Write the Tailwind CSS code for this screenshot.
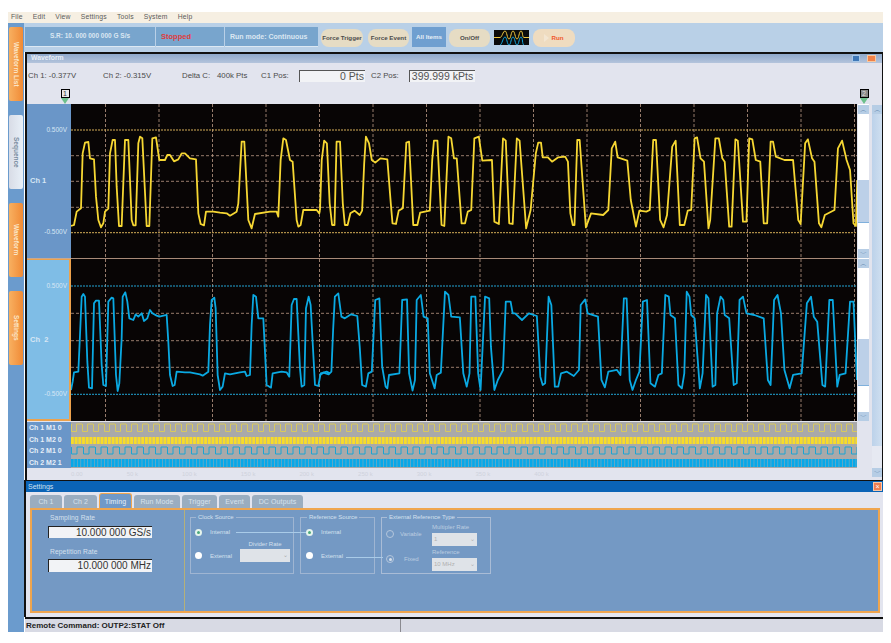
<!DOCTYPE html>
<html>
<head>
<meta charset="utf-8">
<script src="https://cdn.jsdelivr.net/npm/@tailwindcss/browser@4"></script>
</head>
<body class="bg-white">
<div class="ml-2 mt-3 w-[875px] h-[620px] flex flex-col font-['Liberation_Sans',Arial,sans-serif] text-[8px] leading-none overflow-hidden">
  <!-- menu -->
  <div class="h-[11px] bg-[#f6efe2] flex items-center gap-[10px] pl-[3px] text-[#5b5b5b] text-[6.8px] tracking-[0.2px] shrink-0">
    <span>File</span><span>Edit</span><span>View</span><span>Settings</span><span>Tools</span><span>System</span><span>Help</span>
  </div>
  <div class="flex flex-1 min-h-0">
    <!-- sidebar -->
    <div class="w-[16px] shrink-0 bg-[#6b9bcd] flex flex-col gap-[14px] pt-[4px] pl-[1px]">
      <div class="w-[14px] h-[74px] rounded-[2px] bg-gradient-to-r from-[#f8b060] to-[#f08a34] text-[#fbe6c8] font-bold text-[6.5px] flex items-center justify-center [writing-mode:vertical-rl]">Waveform List</div>
      <div class="w-[14px] h-[74px] rounded-[2px] bg-gradient-to-r from-[#d8dce6] to-[#e8f0f8] text-[#7a8da0] font-bold text-[6.5px] flex items-center justify-center [writing-mode:vertical-rl]">Sequence</div>
      <div class="w-[14px] h-[74px] rounded-[2px] bg-gradient-to-r from-[#f8b060] to-[#f08a34] text-[#fbe6c8] font-bold text-[6.5px] flex items-center justify-center [writing-mode:vertical-rl]">Waveform</div>
      <div class="w-[14px] h-[74px] rounded-[2px] bg-gradient-to-r from-[#f8b060] to-[#f08a34] text-[#fbe6c8] font-bold text-[6.5px] flex items-center justify-center [writing-mode:vertical-rl]">Settings</div>
    </div>
    <div class="flex-1 min-w-0 flex flex-col">
      <!-- toolbar -->
      <div class="h-[29px] shrink-0 bg-[#b9d0e7] flex items-start pl-[1px] pt-[4px] text-[7.5px]">
        <div class="w-[130px] h-[20px] bg-[#78a5cd] border-b border-[#dce8f3] text-[#dbe7f2] font-bold text-[6.5px] flex items-center justify-center whitespace-nowrap">S.R: 10. 000 000 000 G S/s</div>
        <div class="ml-[1px] w-[68px] h-[20px] bg-[#78a5cd] border-b border-[#dce8f3] text-[#e03a3a] font-bold text-[7.5px] flex items-center pl-[5px]">Stopped</div>
        <div class="ml-[1px] w-[93px] h-[20px] bg-[#78a5cd] border-b border-[#dce8f3] text-[#dbe7f2] font-bold text-[7px] flex items-center pl-[5px] whitespace-nowrap">Run mode: Continuous</div>
        <div class="ml-[3px] mt-[2px] w-[42px] h-[18px] rounded-[8px] bg-[#e6dcc4] text-[#4c4c4c] font-bold text-[6.2px] flex items-center justify-center whitespace-nowrap">Force Trigger</div>
        <div class="ml-[5px] mt-[2px] w-[41px] h-[18px] rounded-[8px] bg-[#e6dcc4] text-[#4c4c4c] font-bold text-[6.2px] flex items-center justify-center whitespace-nowrap">Force Event</div>
        <div class="ml-[3px] w-[34px] h-[20px] bg-[#6f9fd0] text-[#e6eef6] font-bold text-[6.2px] flex items-center justify-center whitespace-nowrap">All Items</div>
        <div class="ml-[3px] mt-[2px] w-[41px] h-[18px] rounded-[8px] bg-[#e6dcc4] text-[#4c4c4c] font-bold text-[6.2px] flex items-center justify-center">On/Off</div>
        <svg class="ml-[4px] mt-[3px]" width="35" height="15" viewBox="0 0 35 15">
          <rect width="35" height="15" fill="#0b0b0b"/>
          <path d="M0 7.5H6C8 7.5 9 1 11 1S13 9 15 9 17 1 19 1 21 9 23 9 25 1 27 1 28 7.5 30 7.5H35" fill="none" stroke="#f0c840" stroke-width="1"/>
          <path d="M6 15C8 15 9 7 11 7S13 15 15 15 17 7 19 7 21 15 23 15 25 7 27 7 28 15 30 15" fill="none" stroke="#12a8e0" stroke-width="1"/>
        </svg>
        <div class="ml-[4px] mt-[2px] w-[42px] h-[18px] rounded-[8px] bg-[#efdcc0] text-[#f0582c] font-bold text-[6.2px] flex items-center justify-center gap-[2px]">
          <svg width="5" height="8" viewBox="0 0 5 8"><path d="M0 0L5 4L0 8Z" fill="#f3e6d2"/></svg><span>Run</span>
        </div>
      </div>
      <!-- waveform window -->
      <div class="h-[428px] shrink-0 ml-[1px] w-[858px] border-t-2 border-l-2 border-r border-[#111] bg-[#e2e4ee] flex flex-col">
        <div class="h-[9px] shrink-0 bg-gradient-to-b from-[#8fa9cb] to-[#b4c4dc] flex items-center pl-[4px] text-[#e9eff6] font-bold text-[6.8px]">
          <span>Waveform</span>
          <div class="ml-auto mr-[6px] flex gap-[7px]">
            <div class="w-[8px] h-[7px] bg-[#3f78b8] border border-[#a8c8e8]"></div>
            <div class="w-[9px] h-[7px] bg-[#f0824a] border border-[#f8c8a0]"></div>
          </div>
        </div>
        <!-- readouts -->
        <div class="h-[25px] shrink-0 flex items-start pt-[7px] text-[#4a4a4a] text-[7.8px] font-medium">
          <span class="ml-[1px] w-[75px] mt-[2px]">Ch 1: -0.377V</span>
          <span class="w-[79px] mt-[2px]">Ch 2: -0.315V</span>
          <span class="w-[35px] mt-[2px]">Delta C:</span>
          <span class="w-[44px] mt-[2px]">400k Pts</span>
          <span class="w-[38px] mt-[2px]">C1 Pos:</span>
          <div class="w-[66px] h-[12px] bg-[#f2f3f6] border-l border-t border-[#555] text-right text-[10.5px] leading-[10px] pr-[1px] text-[#555] font-normal">0 Pts</div>
          <span class="ml-[6px] w-[38px] mt-[2px]">C2 Pos:</span>
          <div class="w-[66px] h-[12px] bg-[#f2f3f6] border-l border-t border-[#555] text-center text-[10.5px] leading-[10px] text-[#555] font-normal whitespace-nowrap">399.999 kPts</div>
        </div>
        <!-- markers -->
        <div class="h-[16px] shrink-0 flex items-start pt-[1px]">
          <div class="ml-[33px] flex flex-col items-center w-[10px]">
            <div class="w-[9px] h-[9px] border border-black bg-[#e8e8e8] text-[7px] text-center leading-[7px] text-[#333]">1</div>
            <svg width="8" height="6" viewBox="0 0 8 6"><path d="M0 0H8L4 6Z" fill="#6cc08c"/></svg>
          </div>
          <div class="ml-[789px] flex flex-col items-center w-[10px]">
            <div class="w-[9px] h-[9px] border border-black bg-[#8a8a8a] text-[7px] text-center leading-[7px] text-[#ddd]">2</div>
            <svg width="8" height="6" viewBox="0 0 8 6"><path d="M0 0H8L4 6Z" fill="#6cc08c"/></svg>
          </div>
        </div>
        <div class="flex h-[376px] shrink-0">
          <div class="w-[842px] shrink-0 flex flex-col">
            <!-- analog plots -->
            <div class="h-[317px] shrink-0 flex">
              <div class="w-[44px] shrink-0 flex flex-col text-[#d7e6f4] text-[6.5px]">
                <div class="h-[154px] bg-[#6a96c8] pt-[21px] flex flex-col gap-[41px]">
                  <div class="h-[10px] flex items-center justify-end pr-[4px]">0.500V</div>
                  <div class="h-[10px] flex items-center pl-[3px] font-bold text-[7.5px]">Ch 1</div>
                  <div class="h-[10px] flex items-center justify-end pr-[4px]">-0.500V</div>
                </div>
                <div class="h-[1px] bg-[#c8a890]"></div>
                <div class="h-[162px] bg-[#7fbde6] border-r-2 border-b-2 border-t border-[#eda24c] pt-[21px] flex flex-col gap-[44px]">
                  <div class="h-[10px] flex items-center justify-end pr-[2px]">0.500V</div>
                  <div class="h-[10px] flex items-center pl-[3px] font-bold text-[7.5px]">Ch&nbsp;&nbsp;2</div>
                  <div class="h-[10px] flex items-center justify-end pr-[2px]">-0.500V</div>
                </div>
              </div>
              <svg class="shrink-0 block" width="786" height="317" viewBox="71 104 786 317">
                <rect x="71" y="104" width="786" height="317" fill="#080505"/>
                <g stroke="#bd9a86" stroke-width="0.8" stroke-dasharray="3 2">
                  <path d="M105.5 104V421M159 104V421M212.5 104V421M266 104V421M319.5 104V421M373 104V421M426.5 104V421M480 104V421M533.5 104V421M587 104V421M640.5 104V421M694 104V421M747.5 104V421M801 104V421M854.5 104V421"/>
                  <path d="M71 155.7H857M71 181.3H857M71 207.3H857M71 313.3H857M71 340.7H857M71 367.3H857"/>
                </g>
                <path d="M71 258.5H857" stroke="#a88a78" stroke-width="1"/>
                <path d="M71 130H857M71 232.7H857" stroke="#d4ae58" stroke-width="1" stroke-dasharray="2 1"/>
                <path d="M71 286H857M71 394.3H857" stroke="#22a6d6" stroke-width="1" stroke-dasharray="2 1"/>
                <g fill="none" stroke="#f6d733" stroke-width="1.8" stroke-linejoin="round">
                  <polyline transform="translate(70 120) scale(.3333)" vector-effect="non-scaling-stroke" points="3,318 12,315 20,275 33,265 38,100 45,68 55,66 60,115 72,118 78,230 85,300 93,322 100,310 105,275 115,266 120,100 128,60 135,60 140,200 147,318 155,318 165,60 175,60 185,300 190,316 197,316 205,70 210,50 217,55 230,318 238,318 247,55 258,52 268,120 285,120 292,105 300,105 312,124 325,118 335,100 345,100 360,115 378,118 385,280 392,312 402,316 408,275 430,275 450,278 470,280 480,287 500,275 505,250 515,65 523,65 535,300 545,325 555,282 600,275 620,275 625,290 632,120 640,55 648,60 660,120 668,125 680,300 685,320 692,315 700,270 740,270 748,280 750,270"/>
                  <polyline transform="translate(320 120) scale(.3453 .3333)" vector-effect="non-scaling-stroke" points="0,270 5,120 12,62 20,70 28,250 35,315 42,315 48,65 58,65 66,250 72,315 80,315 88,280 100,272 115,285 122,272 128,130 133,50 142,70 150,120 160,128 175,115 195,118 205,250 210,310 220,312 228,272 240,265 250,68 258,65 270,315 282,315 290,278 318,272 325,120 330,62 340,62 352,315 360,318 372,50 380,55 388,115 396,115 410,310 420,310 428,275 438,270 447,55 460,50 470,122 498,120 505,305 518,312 530,55 538,62 548,310 558,312 570,55 578,62 597,325 610,270 625,100 632,68 640,68 645,112 660,112 672,125 690,112 710,110 718,125 725,280 732,315 737,315 745,60 752,60 770,322 785,280 820,285 835,270 845,85 855,65 862,112 890,122 900,240 915,320 925,272 945,275 955,270 965,60 973,60 985,300 995,322 1005,285 1020,80 1030,62 1042,315 1055,315 1065,272 1075,270 1085,55 1092,52 1102,115 1112,125 1125,325 1130,300 1145,55 1155,55 1165,115 1172,125 1185,320 1192,320 1203,58 1210,62 1225,305 1235,305 1243,55 1252,58 1262,120 1275,125 1285,310 1295,310 1305,65 1312,65 1320,110 1345,120 1370,120 1385,300 1392,312 1405,70 1413,58 1425,115 1432,125 1445,310 1452,322 1462,285 1490,270 1500,85 1512,62 1525,120 1535,150 1545,310 1552,318 1556,180"/>
                </g>
                <g fill="none" stroke="#0aa9e2" stroke-width="1.8" stroke-linejoin="round">
                  <polyline transform="translate(70 275) scale(.3333)" vector-effect="non-scaling-stroke" points="3,345 8,320 12,292 25,290 30,180 35,65 40,57 45,65 52,260 57,338 66,340 72,85 78,77 87,77 95,270 100,330 108,333 115,80 125,68 130,70 138,300 143,348 148,325 155,190 158,65 166,52 172,80 178,130 190,135 197,118 205,125 215,115 222,138 232,130 240,105 247,115 260,122 268,125 290,120 295,200 300,300 308,333 314,330 320,290 345,292 360,292 390,298 398,302 415,290 420,150 425,75 433,68 437,100 443,300 450,345 458,335 465,295 480,298 510,292 525,290 530,303 540,300 545,150 550,60 558,65 565,130 580,130 590,330 603,338 608,295 635,290 650,292 658,305 665,90 672,72 680,72 690,280 695,335 703,330 708,100 716,65 722,90 735,330 745,333 752,295 770,290 780,295"/>
                  <polyline transform="translate(320 280) scale(.3453 .3333)" vector-effect="non-scaling-stroke" points="0,285 10,278 25,283 33,275 38,150 43,50 53,40 62,110 72,115 90,103 108,108 115,200 122,315 133,320 140,280 150,275 160,60 172,55 180,260 190,320 195,325 200,285 230,280 238,60 252,58 258,280 268,332 275,300 280,60 292,45 300,110 312,115 318,280 332,325 338,285 350,278 362,35 372,45 380,110 405,112 415,280 425,320 433,280 438,50 450,50 458,280 465,330 478,50 490,55 495,200 505,330 515,300 530,270 538,65 552,65 558,100 565,100 585,120 605,100 628,108 638,290 645,315 652,310 662,50 670,75 680,320 690,320 698,280 715,275 735,288 750,270 755,75 768,58 775,100 805,110 815,300 825,322 835,275 860,270 870,285 880,55 888,55 897,300 905,330 915,300 925,275 935,65 947,60 957,310 970,320 980,285 990,280 1000,45 1010,50 1015,105 1028,115 1038,315 1048,325 1055,280 1062,35 1070,50 1075,105 1085,115 1100,325 1108,280 1118,45 1125,55 1137,320 1145,315 1150,100 1160,50 1168,60 1172,105 1185,115 1198,315 1207,310 1215,60 1225,50 1235,100 1258,105 1285,115 1297,300 1305,315 1315,60 1325,45 1335,100 1345,270 1360,325 1370,285 1395,280 1410,70 1422,50 1430,110 1440,125 1455,315 1463,320 1475,60 1485,60 1498,320 1505,285 1522,280 1535,65 1545,65 1555,300"/>
                </g>
              </svg>
              <!-- channel scrollbars -->
              <div class="w-[12px] shrink-0 pl-[1px] flex flex-col text-[#5f86ad]">
                <div class="h-[154px] bg-white flex flex-col">
                  <div class="h-[9px] mt-[1px] bg-[#b6cde5] text-[7px] text-center leading-[9px]">︿</div>
                  <div class="flex-1 flex flex-col pt-[66px] pb-[26px]"><div class="flex-1 bg-[#bcd0e8] border-b border-[#7fb0dc]"></div></div>
                  <div class="h-[9px] bg-[#b6cde5] text-[7px] text-center leading-[9px]">﹀</div>
                </div>
                <div class="h-[163px] bg-white flex flex-col">
                  <div class="h-[9px] mt-[1px] bg-[#b6cde5] text-[7px] text-center leading-[9px]">︿</div>
                  <div class="flex-1 flex flex-col pt-[71px] pb-[26px]"><div class="flex-1 bg-[#bcd0e8] border-b border-[#7fb0dc]"></div></div>
                  <div class="h-[9px] bg-[#b6cde5] text-[7px] text-center leading-[9px]">﹀</div>
                </div>
              </div>
            </div>
            <!-- digital rows -->
            <div class="h-[46px] shrink-0 mt-[1px] w-[830px] flex">
              <div class="w-[44px] shrink-0 bg-[#6a96c8] text-[#e6eff8] font-bold text-[7px] flex flex-col">
                <div class="h-[11.5px] flex items-center pl-[2px]">Ch 1 M1 0</div>
                <div class="h-[11.5px] flex items-center pl-[2px]">Ch 1 M2 0</div>
                <div class="h-[11.5px] flex items-center pl-[2px]">Ch 2 M1 0</div>
                <div class="h-[11.5px] flex items-center pl-[2px]">Ch 2 M2 1</div>
              </div>
              <svg class="shrink-0 block" width="786" height="46" viewBox="0 0 786 46">
                <defs>
                  <pattern id="p1" width="11" height="46" patternUnits="userSpaceOnUse"><path d="M0.5 2V9.5H5.5V2H11" fill="none" stroke="#d8c860" stroke-width="1"/></pattern>
                  <pattern id="p2" width="3.7" height="46" patternUnits="userSpaceOnUse"><rect x="0" y="15" width="3" height="7" fill="#f8dc28"/></pattern>
                  <pattern id="p3" width="12" height="46" patternUnits="userSpaceOnUse"><path d="M0.5 25V32H6V25H12" fill="none" stroke="#1ba4d4" stroke-width="1"/></pattern>
                  <pattern id="p4" width="3.4" height="46" patternUnits="userSpaceOnUse"><rect x="0" y="37" width="2.9" height="8" fill="#08a8e8"/></pattern>
                </defs>
                <rect width="786" height="46" fill="#a9a9a9"/>
                <rect width="786" height="46" fill="url(#p1)"/>
                <rect width="786" height="46" fill="url(#p2)"/>
                <rect width="786" height="46" fill="url(#p3)"/>
                <rect width="786" height="46" fill="url(#p4)"/>
              </svg>
            </div>
            <!-- faint time axis -->
            <div class="flex-1 pt-[3px] pl-[44px] text-[#cfd2dc] text-[6px] flex gap-[44px] overflow-hidden">
              <span>0.00</span><span>50 k</span><span>100 k</span><span>150 k</span><span>200 k</span><span>250 k</span><span>300 k</span><span>350 k</span><span>400 k</span>
            </div>
          </div>
          <!-- outer scrollbar -->
          <div class="w-[12px] shrink-0 ml-[1px] pl-[2px] pt-[1px] flex flex-col text-[#5f86ad] pb-[3px]">
            <div class="h-[9px] bg-[#b6cde5] text-[7px] text-center leading-[9px]">︿</div>
            <div class="h-[332px] bg-gradient-to-r from-[#bcd2ea] to-[#cfdff0]"></div>
            <div class="flex-1 bg-[#e6e9f2]"></div>
            <div class="h-[9px] bg-[#b6cde5] text-[7px] text-center leading-[9px]">﹀</div>
          </div>
        </div>
      </div>
      <!-- settings window -->
      <div class="h-[137px] shrink-0 border-t border-l-2 border-[#111] w-[859px] bg-[#e3e5ef] flex flex-col">
        <div class="h-[11px] shrink-0 bg-[#0a63b6] flex items-center pl-[2px] text-[#cfe0f2] text-[7px]">
          <span>Settings</span>
          <div class="ml-auto mr-[1px] w-[9px] h-[9px] bg-[#f07d50] border border-[#f8c8a8] text-white text-[7px] leading-[7px] text-center">×</div>
        </div>
        <!-- tabs -->
        <div class="h-[16px] shrink-0 flex items-end pl-[4px] gap-[2px] text-[#d8e2ec] text-[7px] tracking-[0.1px]">
          <div class="w-[32px] h-[13px] rounded-t-[3px] bg-[#9aadc0] flex items-center justify-center">Ch 1</div>
          <div class="w-[33px] h-[13px] rounded-t-[3px] bg-[#9aadc0] flex items-center justify-center">Ch 2</div>
          <div class="w-[33px] h-[15px] rounded-t-[3px] bg-[#7099c8] border-t border-x border-[#f0a64e] flex items-center justify-center text-[#e6eef6]">Timing</div>
          <div class="w-[46px] h-[13px] rounded-t-[3px] bg-[#9aadc0] flex items-center justify-center">Run Mode</div>
          <div class="w-[35px] h-[13px] rounded-t-[3px] bg-[#9aadc0] flex items-center justify-center">Trigger</div>
          <div class="w-[31px] h-[13px] rounded-t-[3px] bg-[#9aadc0] flex items-center justify-center">Event</div>
          <div class="w-[51px] h-[13px] rounded-t-[3px] bg-[#9aadc0] flex items-center justify-center">DC Outputs</div>
        </div>
        <!-- panel -->
        <div class="h-[105px] shrink-0 ml-[4px] w-[850px] border-2 border-[#efa54e] bg-[#7499c4] flex text-[#d4e0ee]">
          <div class="w-[153px] shrink-0 border-r border-[#b5b07a] pl-[16px] pt-[3px]">
            <div class="h-[10px] flex items-center pl-[2px] text-[6.7px] tracking-[0.1px]">Sampling Rate</div>
            <div class="mt-[3px] w-[104px] h-[12px] bg-[#f2f3f6] border-l border-t border-[#222] text-right pr-[1px] text-[#333] text-[10px] leading-[11px]">10.000 000 GS/s</div>
            <div class="mt-[9px] h-[10px] flex items-center pl-[2px] text-[6.7px] tracking-[0.1px]">Repetition Rate</div>
            <div class="mt-[2px] w-[104px] h-[13px] bg-[#f2f3f6] border-l border-t border-[#222] text-right pr-[1px] text-[#333] text-[10px] leading-[12px]">10.000 000 MHz</div>
          </div>
          <div class="relative flex-1 pl-[5px] pt-[2px] flex items-start gap-[6px] text-[6px]">
            <fieldset class="w-[104px] h-[62px] border border-[#9fb5d2] pl-[4px]">
              <legend class="ml-[1px] px-[2px] h-[10px] leading-[10px]">Clock Source</legend>
              <div class="h-[12px] mt-[4px] flex items-center gap-[8px]">
                <div class="w-[7px] h-[7px] rounded-full bg-white border-2 border-[#e6f4ec] flex items-center justify-center"><div class="w-[3px] h-[3px] rounded-full bg-[#4aa87c]"></div></div>
                <span>Internal</span>
              </div>
              <div class="h-[24px] flex items-end gap-[8px]">
                <div class="w-[7px] h-[7px] mb-[3px] rounded-full bg-white"></div>
                <span class="mb-[3px] w-[22px]">External</span>
                <div class="flex flex-col items-center">
                  <span class="h-[10px] leading-[10px]">Divider Rate</span>
                  <div class="w-[50px] h-[13px] bg-[#dfe3e8] text-[#aaa] text-right pr-[2px] leading-[13px]">⌄</div>
                </div>
              </div>
            </fieldset>
            <fieldset class="w-[75px] h-[62px] border border-[#9fb5d2] pl-[5px]">
              <legend class="ml-[1px] px-[2px] h-[10px] leading-[10px]">Reference Source</legend>
              <div class="h-[12px] mt-[4px] flex items-center gap-[8px]">
                <div class="w-[7px] h-[7px] rounded-full bg-white border-2 border-[#e6f4ec] flex items-center justify-center"><div class="w-[3px] h-[3px] rounded-full bg-[#4aa87c]"></div></div>
                <span>Internal</span>
              </div>
              <div class="h-[24px] flex items-end gap-[8px]">
                <div class="w-[7px] h-[7px] mb-[3px] rounded-full bg-white"></div>
                <span class="mb-[3px]">External</span>
              </div>
            </fieldset>
            <fieldset class="w-[110px] h-[62px] border border-[#a9bcd6] pl-[4px] text-[#bccde0]">
              <legend class="ml-[1px] px-[2px] h-[10px] leading-[10px] text-[#d4e0ee]">External Reference Type</legend>
              <div class="h-[24px] mt-[0px] flex items-center">
                <div class="w-[8px] h-[8px] rounded-full border border-[#b4c6dc]"></div>
                <span class="ml-[6px] w-[32px]">Variable</span>
                <div class="flex flex-col">
                  <span class="h-[11px] leading-[10px]">Multipler Rate</span>
                  <div class="w-[45px] h-[13px] bg-[#dfe3e8] text-[#b0b0b0] leading-[13px] flex justify-between px-[2px]"><span>1</span><span>⌄</span></div>
                </div>
              </div>
              <div class="h-[24px] mt-[1px] flex items-center">
                <div class="w-[8px] h-[8px] rounded-full border border-[#b4c6dc] flex items-center justify-center"><div class="w-[3px] h-[3px] rounded-full bg-[#d8e0ea]"></div></div>
                <span class="ml-[10px] w-[28px]">Fixed</span>
                <div class="flex flex-col">
                  <span class="h-[11px] leading-[10px]">Reference</span>
                  <div class="w-[45px] h-[13px] bg-[#dfe3e8] text-[#b0b0b0] leading-[13px] flex justify-between px-[2px]"><span>10 MHz</span><span>⌄</span></div>
                </div>
              </div>
            </fieldset>
            <div class="absolute left-[51px] top-[22px] w-[70px] h-[1px] bg-[#a9cbe8]"></div>
            <div class="absolute left-[161px] top-[47px] w-[37px] h-[1px] bg-[#a9cbe8]"></div>
          </div>
        </div>
      </div>
      <!-- status bar -->
      <div class="flex-1 bg-[#d8dae4] border-t-2 border-[#111] ml-[1px] w-[858px] flex">
        <div class="w-[376px] border-r border-[#8a8a90] pl-[1px] text-[#222] font-bold text-[8px] flex items-center">Remote Command: OUTP2:STAT Off</div>
      </div>
    </div>
  </div>
</div>
</body>
</html>
